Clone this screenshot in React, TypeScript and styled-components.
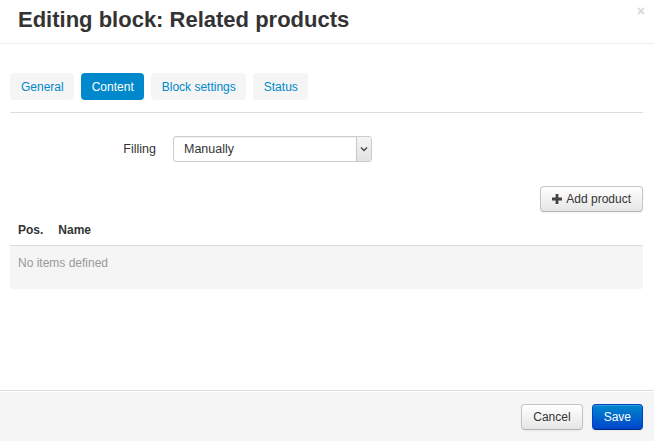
import React from "react";
import styled, { createGlobalStyle } from "styled-components";

const Global = createGlobalStyle`
  html, body { margin: 0; padding: 0; background: #fff; }
  body { font-family: "Liberation Sans", Arial, sans-serif; color: #333; }
  * { box-sizing: border-box; }
`;

const Modal = styled.div`
  width: 654px;
  height: 441px;
  display: flex;
  flex-direction: column;
  background: #fff;
  position: relative;
`;

const Header = styled.div`
  height: 44px;
  border-bottom: 1px solid #eee;
  padding: 6px 18px 0;
`;

const Title = styled.h3`
  margin: 0;
  font-size: 22px;
  line-height: 28px;
  font-weight: bold;
  color: #333;
`;

const Close = styled.span`
  position: absolute;
  top: 3px;
  right: 9px;
  font-size: 14px;
  font-weight: bold;
  color: #d8d8d8;
  line-height: 16px;
`;

const Body = styled.div`
  flex: 1;
  padding: 29px 11px 0 10px;
`;

const Tabs = styled.div`
  display: flex;
  gap: 7px;
  padding-bottom: 12px;
  border-bottom: 1px solid #ddd;
`;

const Tab = styled.div<{ $active?: boolean }>`
  height: 27px;
  padding: 0 10px 0 11px;
  display: flex;
  align-items: center;
  font-size: 12px;
  border-radius: 4px;
  background: ${(p) => (p.$active ? "#0088cc" : "#f5f5f5")};
  color: ${(p) => (p.$active ? "#fff" : "#0088cc")};
`;

const FormRow = styled.div`
  display: grid;
  grid-template-columns: 146px 199px;
  column-gap: 17px;
  align-items: center;
  margin-top: 23px;
`;

const Label = styled.label`
  text-align: right;
  font-size: 12.5px;
  color: #333;
`;

const Select = styled.div`
  height: 26px;
  border: 1px solid #ccc;
  border-radius: 3px;
  display: flex;
  align-items: stretch;
  font-size: 12.5px;
  color: #333;
  box-shadow: inset 0 1px 1px rgba(0, 0, 0, 0.05);
  overflow: hidden;
`;

const SelectValue = styled.span`
  flex: 1;
  display: flex;
  align-items: center;
  padding-left: 10px;
`;

const SelectArrow = styled.span`
  width: 15px;
  display: flex;
  align-items: center;
  justify-content: center;
  background: linear-gradient(#f4f4f4, #e2e2e2);
  border-left: 1px solid #c8c8c8;
`;

const Toolbar = styled.div`
  display: flex;
  justify-content: flex-end;
  margin-top: 24px;
`;

const Button = styled.button<{ $primary?: boolean }>`
  height: 26px;
  padding: 0 11px;
  display: inline-flex;
  align-items: center;
  gap: 4px;
  font-family: inherit;
  font-size: 12px;
  border-radius: 4px;
  cursor: pointer;
  border: 1px solid ${(p) => (p.$primary ? "#0044cc" : "#c5c5c5")};
  border-bottom-color: ${(p) => (p.$primary ? "#002a80" : "#b3b3b3")};
  color: ${(p) => (p.$primary ? "#fff" : "#333")};
  background: ${(p) =>
    p.$primary
      ? "linear-gradient(#0088cc, #0044cc)"
      : "linear-gradient(#ffffff, #e6e6e6)"};
  box-shadow: inset 0 1px 0 rgba(255, 255, 255, 0.2), 0 1px 2px rgba(0, 0, 0, 0.05);
`;

const TableHead = styled.div`
  display: flex;
  gap: 15px;
  padding: 11px 8px 8px;
  font-size: 12px;
  font-weight: bold;
  color: #333;
  border-bottom: 1px solid #ddd;
`;

const Empty = styled.div`
  height: 43px;
  background: #f5f5f5;
  border-radius: 0 0 3px 3px;
  padding: 10px 8px;
  font-size: 12px;
  color: #999;
`;

const Footer = styled.div`
  height: 51px;
  border-top: 1px solid #ddd;
  background: #f5f5f5;
  display: flex;
  justify-content: flex-end;
  align-items: flex-start;
  gap: 9px;
  padding: 13px 11px 0;
  box-shadow: inset 0 1px 0 #fff;
`;

export default function App() {
  return (
    <>
      <Global />
      <Modal>
        <Header>
          <Title>Editing block: Related products</Title>
          <Close>×</Close>
        </Header>
        <Body>
          <Tabs>
            <Tab>General</Tab>
            <Tab $active>Content</Tab>
            <Tab>Block settings</Tab>
            <Tab>Status</Tab>
          </Tabs>
          <FormRow>
            <Label>Filling</Label>
            <Select>
              <SelectValue>Manually</SelectValue>
              <SelectArrow>
                <svg width="8" height="6" viewBox="0 0 8 6">
                  <path d="M1 1.5 L4 4.5 L7 1.5" fill="none" stroke="#444" strokeWidth="1.4" />
                </svg>
              </SelectArrow>
            </Select>
          </FormRow>
          <Toolbar>
            <Button>
              <svg width="10" height="10" viewBox="0 0 10 10">
                <path d="M3.6 0h2.8v3.6H10v2.8H6.4V10H3.6V6.4H0V3.6h3.6z" fill="#444" />
              </svg>
              Add product
            </Button>
          </Toolbar>
          <TableHead>
            <span>Pos.</span>
            <span>Name</span>
          </TableHead>
          <Empty>No items defined</Empty>
        </Body>
        <Footer>
          <Button>Cancel</Button>
          <Button $primary>Save</Button>
        </Footer>
      </Modal>
    </>
  );
}
